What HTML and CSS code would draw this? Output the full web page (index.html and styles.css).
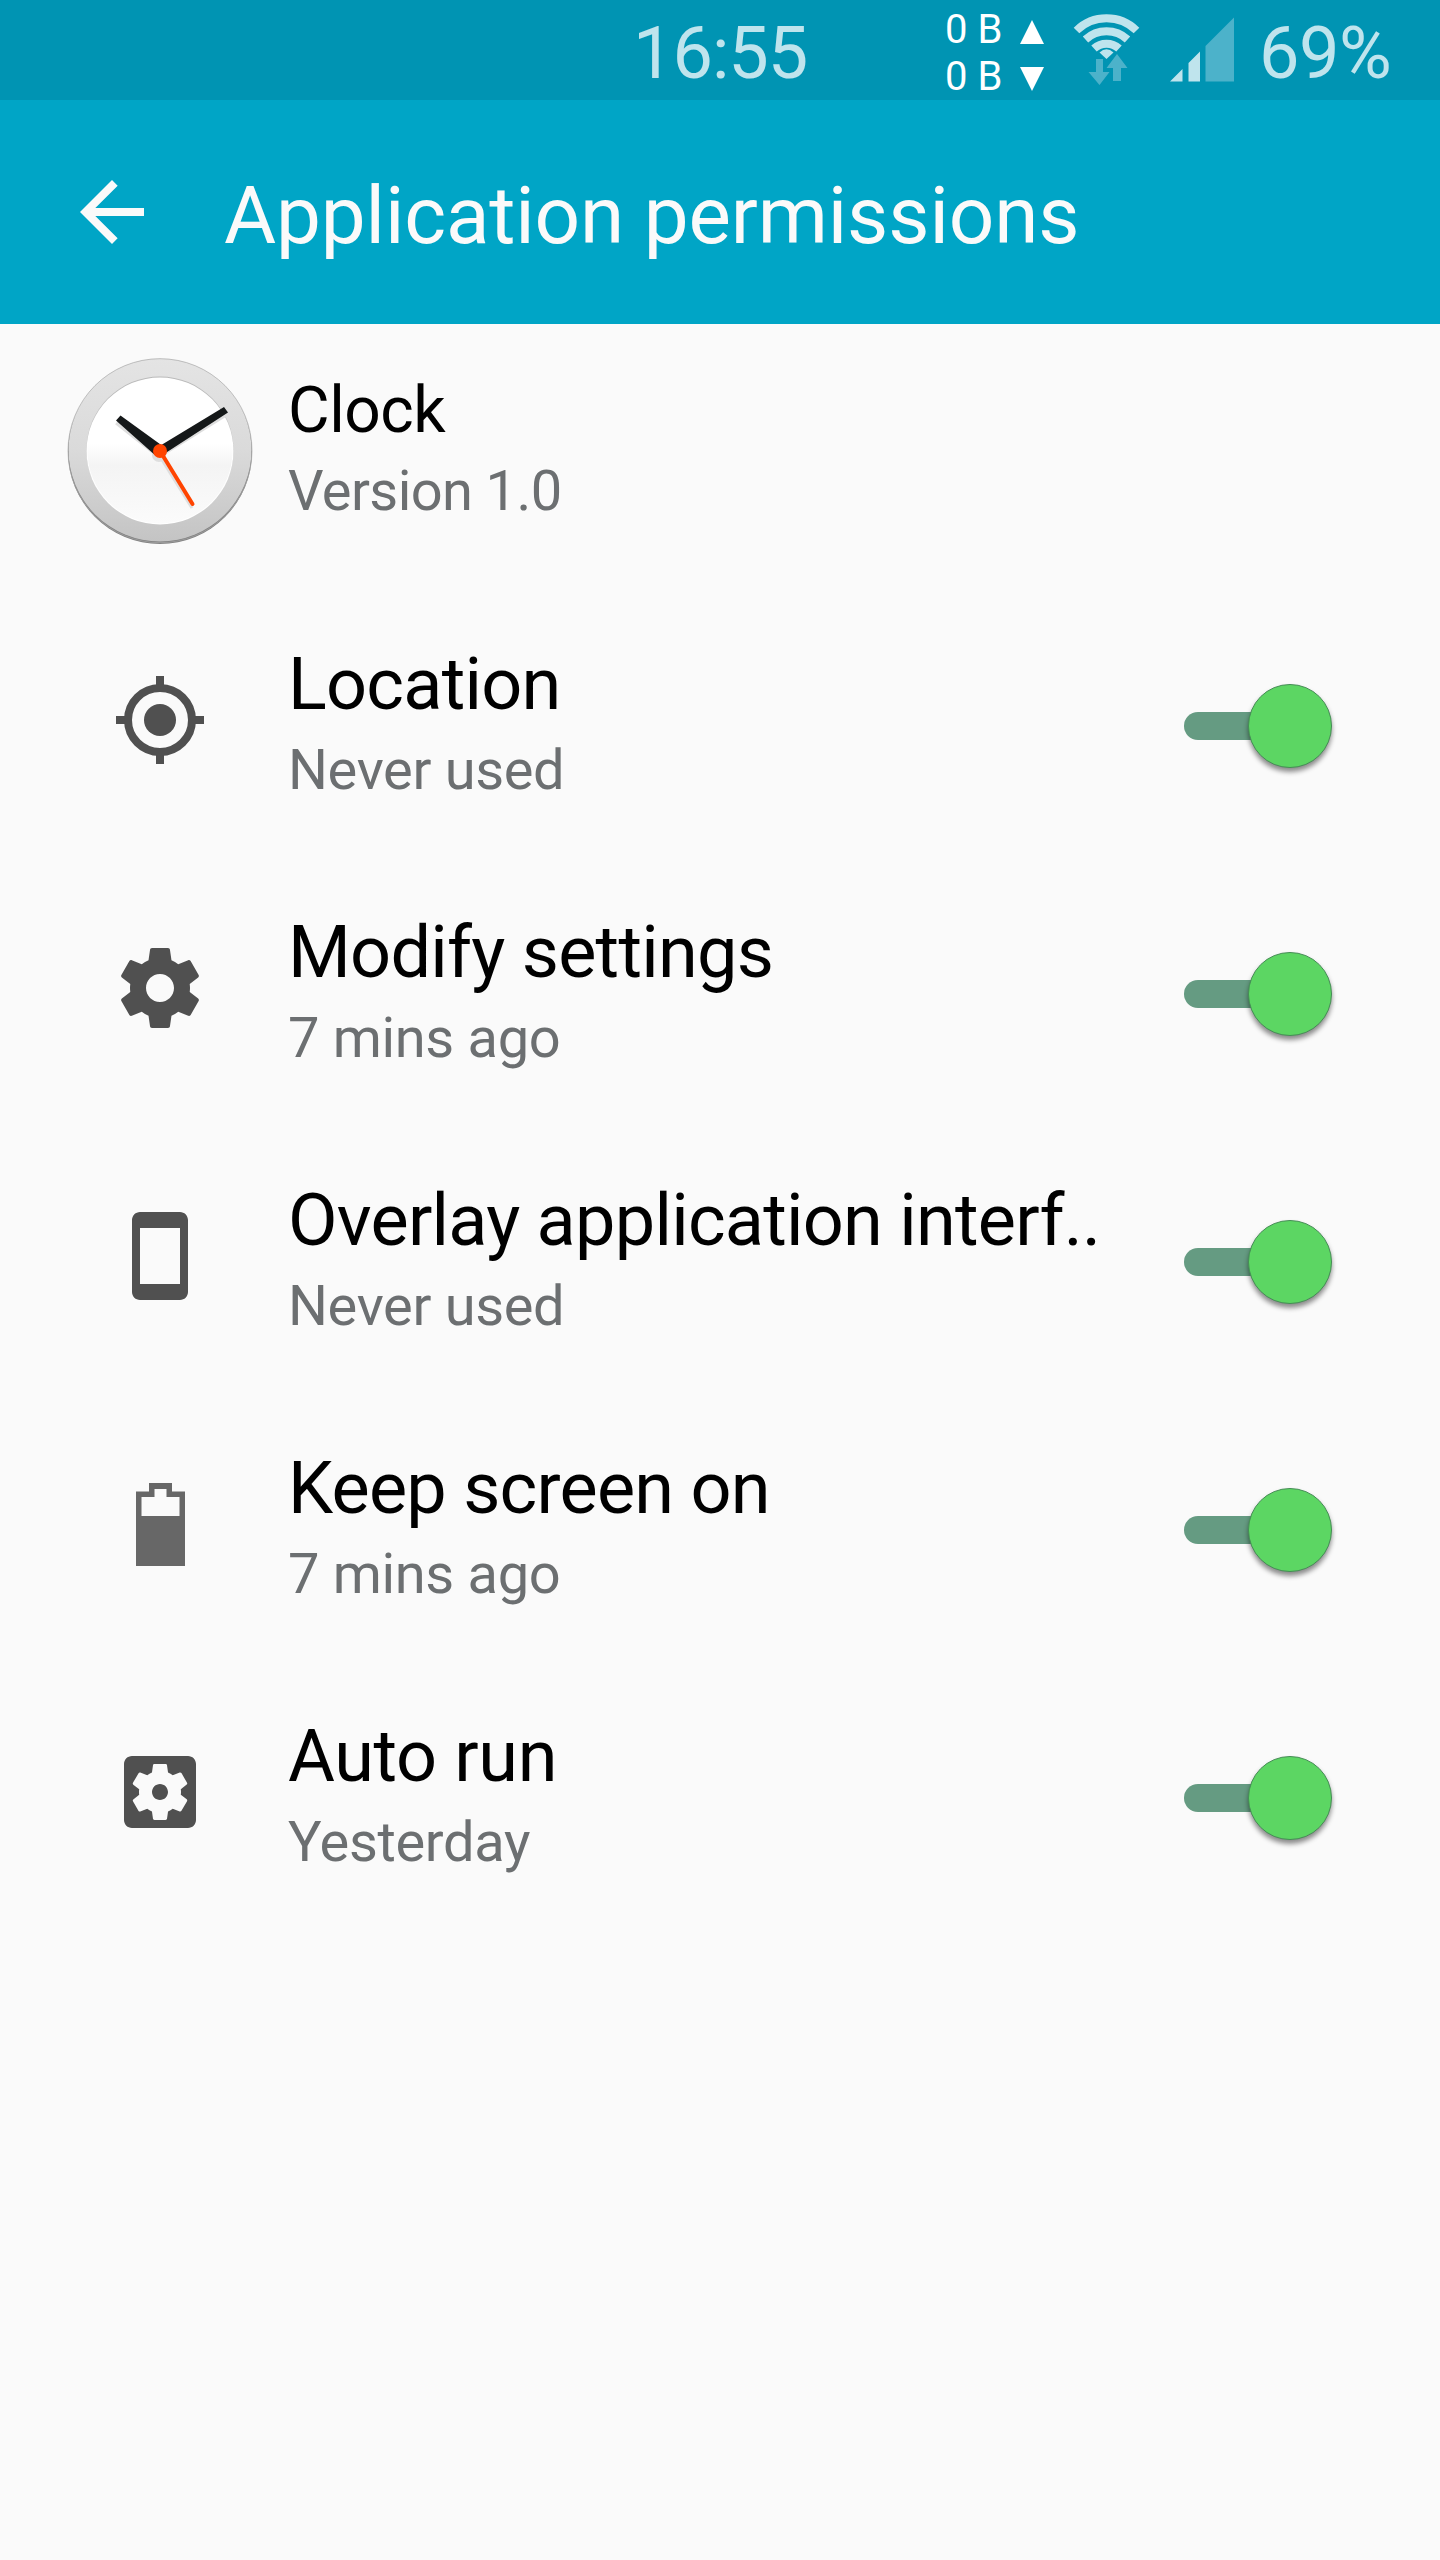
FILE: index.html
```html
<!DOCTYPE html>
<html lang="en">
<head>
<meta charset="utf-8">
<title>Application permissions</title>
<link rel="stylesheet" href="styles.css">
</head>
<body>
<div class="status">
  <span class="time">16:55</span>
  <div class="traffic">
    <div class="rate"><span>0 B</span><svg width="24" height="24" viewBox="0 0 24 24"><path d="M12 0L24 24H0z"/></svg></div>
    <div class="rate"><span>0 B</span><svg width="24" height="24" viewBox="0 0 24 24"><path d="M0 0H24L12 24z"/></svg></div>
  </div>
  <svg class="wifi" width="68" height="74" viewBox="0 0 68 74">
    <g fill="none" stroke="#bfe4ed" stroke-width="8">
      <path d="M3.500 17.500A43 43 0 0 1 63.500 17.500"/>
      <path d="M12.500 26.500A31 31 0 0 1 54.500 26.500"/>
      <path d="M21 35.500A18.500 18.500 0 0 1 46 35.500"/>
    </g>
    <path fill="#bfe4ed" d="M26.500 39.500Q33.500 33 40.500 39.500L33.500 46z"/>
    <path fill="#4cb2ca" d="M23 46h7v13h6.500L26.500 72 15.500 59H23zM44 41L54.500 55H48v13h-8V55h-6.500z"/>
  </svg>
  <svg class="signal" width="64" height="66" viewBox="0 0 64 66">
    <path fill="#bfe4ed" d="M0 64.500L12.500 52v12.500zM18.500 46L30 34.500v30H18.500z"/>
    <path fill="#4cb2ca" d="M35.500 29L64.500 0v64.500h-29z"/>
  </svg>
  <span class="battery">69%</span>
</div>
<header class="bar">
  <svg class="back" width="96" height="96" viewBox="0 0 24 24"><path d="M20 11H7.830l5.590-5.590L12 4l-8 8 8 8 1.410-1.410L7.830 13H20z"/></svg>
  <h1>Application permissions</h1>
</header>
<main>
  <section class="app">
    <svg class="clock" width="200" height="200" viewBox="-100 -100 200 200">
      <defs>
        <linearGradient id="rim" x1="0" y1="0" x2="0" y2="1"><stop offset="0" stop-color="#e4e4e4"/><stop offset=".5" stop-color="#dadada"/><stop offset="1" stop-color="#c4c4c4"/></linearGradient>
        <linearGradient id="face" x1="0" y1="0" x2="0" y2="1"><stop offset=".45" stop-color="#fff"/><stop offset=".6" stop-color="#f4f4f4"/><stop offset="1" stop-color="#fbfbfb"/></linearGradient>
        <filter id="soft" x="-10%" y="-10%" width="120%" height="120%"><feGaussianBlur stdDeviation="0.700"/></filter>
      </defs>
      <circle r="92" cy="1" fill="#808080" filter="url(#soft)"/>
      <circle r="91.500" cy="-1" fill="url(#rim)"/>
      <circle r="92" cy="-.3" fill="none" stroke="#a8a8a8" stroke-width=".7"/>
      <circle r="73.500" cy="-1" fill="#b9b9b9"/>
      <circle r="73.500" fill="#fff"/>
      <circle r="72.500" fill="url(#face)"/>
      <g fill="none" stroke="#dedede" transform="translate(-1 4)">
        <path stroke-width="6" d="M-42-33L0 0 66-41"/><circle r="7" fill="#dedede" stroke="none"/>
        <path stroke-width="3" d="M0 0L33 53"/>
      </g>
      <path fill="#151819" d="M-44-30.500L-39.500-35.500 4-4-4 5zM64-44L68-38.500 4 3-2-4z"/>
      <path stroke="#ff4400" stroke-width="4" stroke-linecap="round" d="M0 0L32.500 53"/>
      <circle r="7" fill="#ff4400"/>
    </svg>
    <div class="label"><h2 class="name">Clock</h2><p class="version">Version 1.0</p></div>
  </section>
  <ul class="list">
    <li>
      <svg class="icon" viewBox="0 0 24 24"><path d="M11 1h2v3h-2zM11 20h2v3h-2zM1 11h3v2H1zM20 11h3v2h-3z"/><circle cx="12" cy="12" r="8" fill="none" stroke="#505050" stroke-width="2"/><circle cx="12" cy="12" r="4"/></svg>
      <div class="label"><h2>Location</h2><p>Never used</p></div><div class="switch"><i></i></div>
    </li>
    <li>
      <svg class="icon" viewBox="0 0 24 24"><path d="M19.430 12.980c.04-.32.07-.64.07-.98s-.03-.66-.07-.98l2.110-1.650c.19-.15.24-.42.12-.64l-2-3.460c-.12-.22-.39-.3-.61-.22l-2.490 1c-.52-.4-1.080-.73-1.690-.98l-.38-2.650C14.460 2.180 14.250 2 14 2h-4c-.25 0-.46.18-.49.42l-.38 2.650c-.61.25-1.170.59-1.690.98l-2.490-1c-.23-.09-.49 0-.61.22l-2 3.460c-.13.22-.07.49.12.64l2.110 1.650c-.04.32-.07.65-.07.98s.03.66.07.98l-2.110 1.650c-.19.15-.24.42-.12.64l2 3.460c.12.22.39.3.61.22l2.490-1c.52.4 1.080.73 1.690.98l.38 2.650c.03.24.24.42.49.42h4c.25 0 .46-.18.49-.42l.38-2.650c.61-.25 1.170-.59 1.690-.98l2.490 1c.23.09.49 0 .61-.22l2-3.460c.12-.22.07-.49-.12-.64l-2.110-1.650zM12 15.500c-1.930 0-3.500-1.570-3.500-3.500s1.570-3.500 3.500-3.500 3.500 1.570 3.500 3.500-1.570 3.500-3.500 3.500z"/></svg>
      <div class="label"><h2>Modify settings</h2><p>7 mins ago</p></div><div class="switch"><i></i></div>
    </li>
    <li>
      <svg class="icon" viewBox="0 0 24 24"><path fill-rule="evenodd" d="M17 1H7c-1.100 0-2 .9-2 2v18c0 1.100.9 2 2 2h10c1.100 0 2-.9 2-2V3c0-1.100-.9-2-2-2zM17 19H7V5h10z"/></svg>
      <div class="label"><h2>Overlay application interf..</h2><p>Never used</p></div><div class="switch"><i></i></div>
    </li>
    <li>
      <svg class="icon charge" viewBox="0 0 96 96"><path fill-rule="evenodd" d="M24 15.500H37V7H60v8.500H73V90H24zM29.500 21v19H67.500V21H54.500V13H42.500v8z"/></svg>
      <div class="label"><h2>Keep screen on</h2><p>7 mins ago</p></div><div class="switch"><i></i></div>
    </li>
    <li>
      <svg class="icon" viewBox="0 0 24 24"><path d="M12 10c-1.100 0-2 .9-2 2s.9 2 2 2 2-.9 2-2-.9-2-2-2zm7-7H5c-1.110 0-2 .9-2 2v14c0 1.100.89 2 2 2h14c1.110 0 2-.9 2-2V5c0-1.100-.89-2-2-2zm-1.750 9c0 .23-.02.46-.05.68l1.480 1.160c.13.11.17.3.08.45l-1.400 2.420c-.09.15-.27.21-.43.15l-1.740-.7c-.36.28-.76.51-1.180.69l-.26 1.850c-.03.17-.18.3-.35.3h-2.800c-.17 0-.32-.13-.35-.29l-.26-1.850c-.43-.18-.82-.41-1.180-.69l-1.740.7c-.16.06-.34 0-.43-.15l-1.400-2.420c-.09-.15-.05-.34.08-.45l1.480-1.160c-.03-.23-.05-.46-.05-.69 0-.23.02-.46.05-.68l-1.480-1.160c-.13-.11-.17-.3-.08-.45l1.400-2.420c.09-.15.27-.21.43-.15l1.740.7c.36-.28.76-.51 1.180-.69l.26-1.850c.03-.17.18-.3.35-.3h2.800c.17 0 .32.13.35.29l.26 1.850c.43.18.82.41 1.180.69l1.740-.7c.16-.06.34 0 .43.15l1.400 2.420c.09.15.05.34-.08.45l-1.480 1.160c.03.23.05.46.05.69z"/></svg>
      <div class="label"><h2 class="wide">Auto run</h2><p>Yesterday</p></div><div class="switch"><i></i></div>
    </li>
  </ul>
</main>
</body>
</html>
```
FILE: styles.css
```css
* { box-sizing: border-box; margin: 0; padding: 0; }
body { width: 1440px; min-height: 2560px; background: #fafafa; font-family: Roboto, sans-serif; color: #000; }
svg { display: block; flex: none; }
.status { display: flex; align-items: flex-start; height: 100px; background: #0094b3; color: #bfe4ed; padding-left: 633px; white-space: nowrap; }
.time, .battery { font-size: 72px; line-height: 85px; padding-top: 11px; }
.time { width: 312px; letter-spacing: -1px; }
.battery { letter-spacing: -.5px; }
.traffic { width: 128px; color: #fff; font-size: 40px; line-height: 47px; padding-top: 6px; }
.rate { display: flex; align-items: center; justify-content: space-between; height: 47px; padding-right: 29px; }
.rate svg { fill: #fff; margin-top: 5px; }
.wifi { margin-top: 13px; }
.signal { margin: 17px 25px 0 29px; }
.bar { display: flex; align-items: center; height: 224px; padding-left: 64px; background: #00a5c6; color: #fafafa; }
.back { fill: #fafafa; }
h1 { font-size: 80px; line-height: 94px; font-weight: 400; letter-spacing: -.15px; margin: 8px 0 0 64px; white-space: nowrap; }
.app { display: flex; height: 262px; padding: 27px 0 0 60px; }
.label { flex: 1; min-width: 0; white-space: nowrap; }
.app .label { margin: 19px 0 0 28px; }
h2 { font-size: 72px; line-height: 85px; font-weight: 400; letter-spacing: -.75px; }
h2.wide { letter-spacing: -.35px; }
h2.name { font-size: 64px; line-height: 81px; letter-spacing: -.5px; }
p { font-size: 56px; line-height: 86px; letter-spacing: -.33px; color: #6c6f71; }
p.version { line-height: 80px; letter-spacing: -.6px; }
.list { list-style: none; }
li { display: flex; align-items: center; height: 268px; padding: 0 108px 0 112px; }
.icon { width: 96px; height: 96px; fill: #505050; }
.charge { fill: #676767; }
li .label { margin: 15px 0 0 80px; }
.switch { display: flex; align-items: center; width: 148px; height: 84px; margin-top: 12px; }
.switch::before { content: ""; width: 90px; height: 28px; border-radius: 14px 0 0 14px; background: #659b82; }
.switch i { width: 84px; height: 84px; margin-left: -26.5px; border: 1px solid #458d55; border-radius: 50%; background: #5cd663; box-shadow: 0 4px 5px rgba(0,0,0,.45); }
```
